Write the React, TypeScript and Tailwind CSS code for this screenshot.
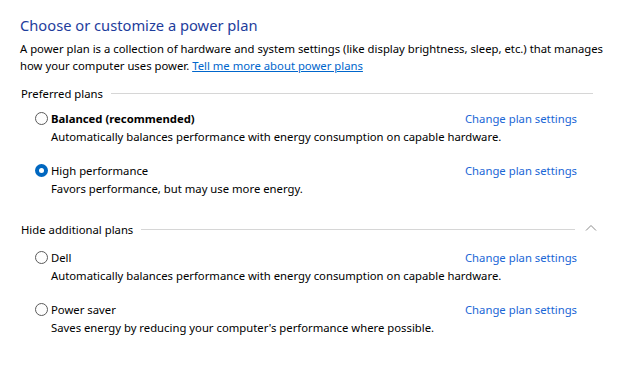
import React from 'react'

const FONT = { fontFamily: '"Noto Sans", "Open Sans", Arial, sans-serif' }

type Plan = { name: string; desc: string; bold?: boolean; checked?: boolean }

const preferred: Plan[] = [
  { name: 'Balanced (recommended)', desc: 'Automatically balances performance with energy consumption on capable hardware.', bold: true },
  { name: 'High performance', desc: 'Favors performance, but may use more energy.', checked: true },
]

const additional: Plan[] = [
  { name: 'Dell', desc: 'Automatically balances performance with energy consumption on capable hardware.' },
  { name: 'Power saver', desc: "Saves energy by reducing your computer's performance where possible." },
]

function Radio({ checked }: { checked?: boolean }) {
  return checked ? (
    <span className="w-[13px] h-[13px] rounded-full bg-[#0067c0] flex items-center justify-center shrink-0">
      <span className="w-[5px] h-[5px] rounded-full bg-white" />
    </span>
  ) : (
    <span className="w-[13px] h-[13px] rounded-full border border-[#5a5a5a] bg-[#fdfdfd] shrink-0" />
  )
}

function PlanRow({ plan }: { plan: Plan }) {
  return (
    <div className="flex flex-col">
      <div className="flex items-center h-[18px] pl-[15px] pr-[45px]">
        <Radio checked={plan.checked} />
        <span className={`ml-[3px] text-black ${plan.bold ? 'font-bold' : ''}`}>{plan.name}</span>
        <span className="ml-auto text-[#1a66d6]">Change plan settings</span>
      </div>
      <div className="h-[18px] flex items-center pl-[31px] text-black">{plan.desc}</div>
    </div>
  )
}

function SectionHead({ label, chevron }: { label: string; chevron?: boolean }) {
  return (
    <div className={`flex items-center h-[18px] pl-[1px] ${chevron ? 'pr-[25px]' : 'pr-[29px]'}`}>
      <span className="text-black">{label}</span>
      <span className="flex-1 h-px bg-[#d6d6d6] ml-[8px]" />
      {chevron && (
        <svg width="12" height="7" viewBox="0 0 12 7" className="ml-[10px] -mt-[3px]">
          <path d="M1 6.5 L6 1.5 L11 6.5" fill="none" stroke="#8a8a8a" strokeWidth="1" />
        </svg>
      )}
    </div>
  )
}

export default function App() {
  return (
    <div className="w-[622px] h-[379px] bg-white pl-[20px] text-[11.3px] leading-[17px] overflow-hidden" style={FONT}>
      <h1 className="pt-[15px] text-[14.7px] leading-[20px] text-[#1e3d9c]">Choose or customize a power plan</h1>
      <p className="mt-[5px] text-black whitespace-nowrap">
        A power plan is a collection of hardware and system settings (like display brightness, sleep, etc.) that manages
        <br />
        how your computer uses power. <span className="text-[#0066cc] underline">Tell me more about power plans</span>
      </p>

      <div className="mt-[10px]">
        <SectionHead label="Preferred plans" />
        <div className="mt-[7px] flex flex-col gap-[16px]">
          {preferred.map(p => <PlanRow key={p.name} plan={p} />)}
        </div>
      </div>

      <div className="mt-[23px]">
        <SectionHead label="Hide additional plans" chevron />
        <div className="mt-[10px] flex flex-col gap-[16px]">
          {additional.map(p => <PlanRow key={p.name} plan={p} />)}
        </div>
      </div>
    </div>
  )
}
